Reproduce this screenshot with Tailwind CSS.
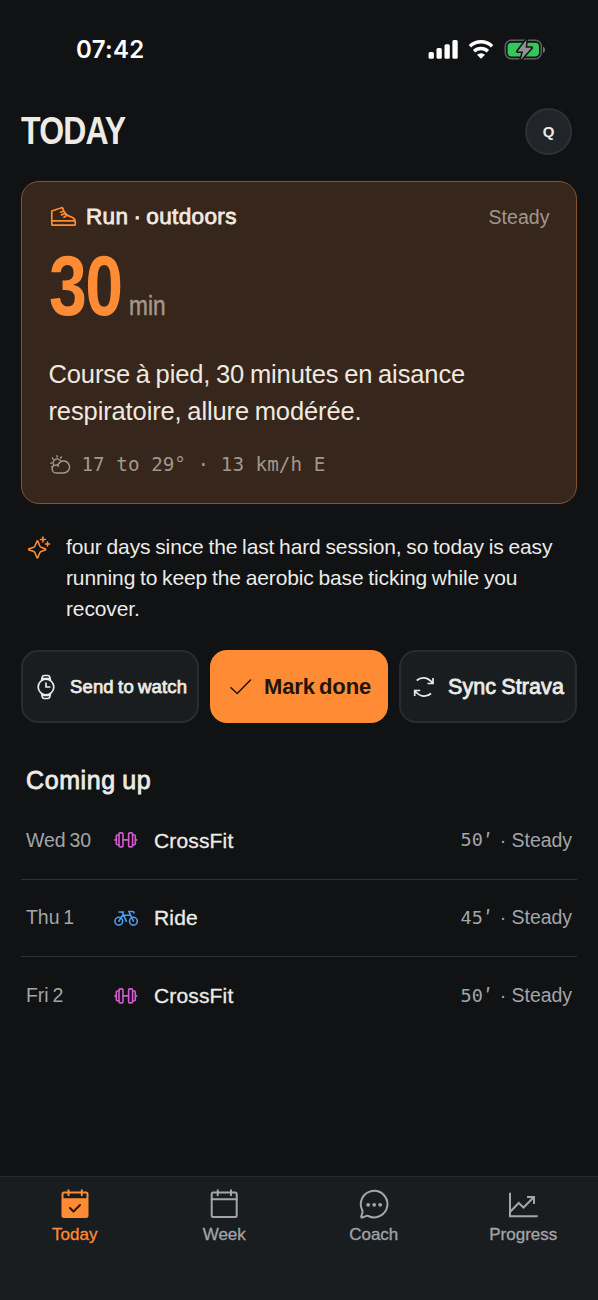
<!DOCTYPE html>
<html lang="en">
<head>
<meta charset="utf-8">
<title>Today</title>
<script src="https://cdn.jsdelivr.net/npm/@tailwindcss/browser@4"></script>
</head>
<body class="bg-[#101213]">
<svg class="hidden">
  <symbol id="barbell" viewBox="0 0 24 18"><g fill="none" stroke="currentColor" stroke-width="1.6" stroke-linejoin="round" stroke-linecap="round"><rect x="5" y="1.900" width="4" height="14" rx="1.200"/><rect x="14.600" y="1.900" width="4" height="14" rx="1.200"/><path d="M9 8.900h5.600M5 4H3.300a1 1 0 0 0-1 1v7.800a1 1 0 0 0 1 1H5M18.600 4h1.700a1 1 0 0 1 1 1v7.800a1 1 0 0 1-1 1h-1.700M2 8.900H.9M21.600 8.900h1.100"/></g></symbol>
</svg>
<div class="flex h-[1300px] w-[598px] flex-col overflow-hidden bg-[#101213] font-['Liberation_Sans',sans-serif] text-[#ecebe6]">
  <div class="flex h-[97px] items-center justify-between pr-[52px] pl-[76px]">
    <div class="mt-[2px] font-['Inter',sans-serif] text-[24px] font-semibold tracking-[.3px] text-white">07:42</div>
    <svg class="h-[24px] w-[118px]" viewBox="428 36 118 24">
      <g fill="#fff"><rect x="428.600" y="51" width="5.300" height="6.800" rx="1.500"/><rect x="436.500" y="47" width="5.300" height="10.800" rx="1.500"/><rect x="444.500" y="43.200" width="5.300" height="14.600" rx="1.500"/><rect x="452.400" y="39" width="5.300" height="18.800" rx="1.500"/><path d="M481 57.800l-4-4a6 6 0 0 1 8 0z"/></g>
      <g fill="none" stroke="#fff" stroke-width="3.400"><path d="M469.900 45.200a16 16 0 0 1 22.200 0"/><path d="M474.100 50.200a10 10 0 0 1 13.800 0"/></g>
      <rect x="505.300" y="39.300" width="36" height="18.400" rx="6" fill="none" stroke="#606163" stroke-width="1.500"/><rect x="507.600" y="41.700" width="31.400" height="13.700" rx="3.800" fill="#34c759"/><path d="M543 45.500q2 .8 2 3.200t-2 3.200z" fill="#77787a"/><path d="M526.500 38.700l-9 11.800h5.600l-2.400 8.400 10.800-12.200h-5.900z" fill="#909294" stroke="#101213" stroke-width="3" stroke-linejoin="round" paint-order="stroke"/>
    </svg>
  </div>
  <main class="flex grow flex-col px-[21px]">
    <header class="flex h-[68px] items-center justify-between pr-[5px]">
      <h1 class="origin-left scale-x-[.82] text-[39px] font-bold tracking-[-1px]">TODAY</h1>
      <div class="flex size-[47px] items-center justify-center rounded-full border-2 border-[#2d3136] bg-[#212429] pt-[2px] text-[15px] font-bold">Q</div>
    </header>
    <section class="mt-[16px] flex h-[323px] flex-col rounded-[18px] border border-[#8a522c] bg-[#36261b] px-[26.500px] text-[#f0e9e0]">
      <div class="mt-[22px] flex h-[26px] items-center">
        <svg class="ml-[1.500px] h-[22px] w-[28px]" viewBox="0 0 28 22" fill="none" stroke="#ff8b34" stroke-width="1.700" stroke-linejoin="round" stroke-linecap="round"><path d="M1.800 5L11.600 1.700q.9-.2 1.200.7L14 5.500q1.500 3 4 4.100l4.500 1.900q2.700 1.300 2.700 4.200v2.700q0 .8-.8.800H2.600q-.8 0-.8-.8zM1.800 14.900h23.300M10.600 6.200L13.800 5M11.600 8.900l3.400-1.400M14 11.200l2.700-2"/></svg>
        <span class="ml-[8px] text-[22.500px] tracking-[.35px] [word-spacing:-1.500px] [-webkit-text-stroke:.8px]">Run · outdoors</span>
        <span class="ml-auto pt-px text-[19.500px] tracking-[.05px] text-[#a2978e]">Steady</span>
      </div>
      <div class="mt-[12px] flex h-[86px] items-end">
        <span class="w-[80px] origin-left translate-y-[1px] scale-x-[.8] text-[85px] leading-[86px] font-bold tracking-[-2px] text-[#ff8b34]">30</span>
        <span class="origin-left -translate-y-[3px] scale-x-[.84] text-[27px] leading-[38px] text-[#a2978e] [-webkit-text-stroke:.5px]">min</span>
      </div>
      <p class="mt-[28px] text-[25.500px] leading-[37px] tracking-[-.12px] [word-spacing:-1.200px]">Course à pied, 30 minutes en aisance<br>respiratoire, allure modérée.</p>
      <div class="mt-[23px] flex h-[24px] items-center text-[#a2978e]">
        <svg class="ml-[1px] h-[20px] w-[22px]" viewBox="0 0 22 20" fill="none" stroke="currentColor" stroke-width="1.400" stroke-linecap="round"><path d="M3.900 10.300A4 4 0 0 1 10.600 5.800M7.300 2L7 .8M3.200 4l-.9-.9M10.700 3l.7-1.100M1.900 7.900L.7 8.100M2.600 11.300l-.9.500"/><path d="M7.700 10.700A6 6 0 1 1 13.600 18H6.300a4 4 0 0 1-1-7.900q1.800-.2 3.100 1.100"/></svg>
        <span class="ml-[10px] font-['DejaVu_Sans_Mono',monospace] text-[19.300px]">17 to 29° · 13 km/h E</span>
      </div>
    </section>
    <section class="mt-[27px] flex text-[21px] leading-[31px] tracking-[-.12px] [word-spacing:-.9px]">
      <svg class="mt-[5px] ml-[6px] h-[24px] w-[24px]" viewBox="0 0 24 24" fill="none" stroke="#ff8b34" stroke-width="1.600" stroke-linejoin="round" stroke-linecap="round"><path d="M9.800 5.600q.6-1.500 1.200 0l1.700 4.100q.4 1 1.400 1.500l4 1.600q1.200.6 0 1.200l-4 1.600q-1 .4-1.400 1.400L11 21.300q-.6 1.500-1.200 0L8.100 17q-.4-1-1.400-1.400l-4.500-1.600q-1.200-.6 0-1.200l4.500-1.600q1-.4 1.400-1.500zM15.900 1v5M13.400 3.500h5M20.500 6v4M18.500 8h4"/></svg>
      <p class="ml-[15px] whitespace-nowrap">four days since the last hard session, so today is easy<br>running to keep the aerobic base ticking while you<br>recover.</p>
    </section>
    <div class="mt-[26px] grid h-[73px] grid-cols-3 gap-[11px] [-webkit-text-stroke:.8px]">
      <button class="flex items-center rounded-[17px] border-2 border-[#282c30] bg-[#1a1d20] pl-[13px] whitespace-nowrap">
        <svg class="h-[26px] w-[20px]" viewBox="0 0 20 26" fill="none" stroke="currentColor" stroke-width="1.700" stroke-linejoin="round" stroke-linecap="round"><circle cx="10" cy="13" r="7.800"/><path d="M10 9V13h3.800M5.600 6.300L6.300 3q.4-1.500 1.800-1.500h3.800q1.400 0 1.800 1.500l.7 3.300M5.600 19.700l.7 3.300q.4 1.500 1.800 1.500h3.800q1.400 0 1.800-1.500l.7-3.300"/><path stroke-width="1.200" d="M6.500 4.300h7M6.500 21.700h7"/></svg>
        <span class="ml-[14px] text-[18.500px] tracking-[.15px] [word-spacing:-1px] [-webkit-text-stroke:.75px]">Send to watch</span>
      </button>
      <button class="flex items-center rounded-[17px] bg-[#ff8b34] pl-[20px] whitespace-nowrap text-[#21140b]">
        <svg class="h-[17px] w-[22px] translate-y-[.5px]" viewBox="0 0 22 17" fill="none" stroke="currentColor" stroke-width="1.500" stroke-linecap="round" stroke-linejoin="round"><path d="M1 9.200l6.200 5.800L20.500 1.500"/></svg>
        <span class="ml-[12px] text-[22px] font-bold tracking-[-.1px] [word-spacing:-2px] [-webkit-text-stroke:0]">Mark done</span>
      </button>
      <button class="flex items-center rounded-[17px] border-2 border-[#282c30] bg-[#1a1d20] pl-[12px] whitespace-nowrap">
        <svg class="h-[22px] w-[22px]" viewBox="0 0 22 22" fill="none" stroke="currentColor" stroke-width="1.700" stroke-linecap="butt" stroke-linejoin="miter"><path d="M3.700 4.500Q6.700 1.800 10.500 1.800q4.700 0 9.300 5.200M20 2v5.500h-5.500M18 17.500Q15 20.200 11.200 20.200q-4.700 0-9.300-5.200M1.700 20v-5.500h5.500"/></svg>
        <span class="ml-[13px] pt-px text-[21.500px] tracking-[.1px] [word-spacing:-1px]">Sync Strava</span>
      </button>
    </div>
    <h2 class="mt-[42px] ml-[5px] text-[25px] leading-[30px] tracking-[.6px] [word-spacing:-1px] [-webkit-text-stroke:.8px]">Coming up</h2>
    <div class="mt-[7px] flex flex-col text-[21px] [&>div]:flex [&>div]:h-[77.500px] [&>div]:items-center [&>div]:px-[5px]">
      <div class="border-b-[1.500px] border-[#2d3034]"><span class="w-[88px] text-[19.500px] tracking-[-.05px] [word-spacing:-1.500px] text-[#a2a5a9]">Wed 30</span><svg class="h-[18px] w-[24px] text-[#d45ad2]"><use href="#barbell"/></svg><span class="ml-[16px] tracking-[.15px] [-webkit-text-stroke:.3px]">CrossFit</span><span class="ml-auto flex items-center text-[19.500px] tracking-[-.05px] text-[#a2a5a9]"><span class="font-['DejaVu_Sans_Mono',monospace] text-[18.500px]">50</span><span class="mr-[6px] w-[11px] pl-[3px] font-['Inter',sans-serif] text-[21px]">′</span><span>· Steady</span></span></div>
      <div class="border-b-[1.500px] border-[#2d3034]"><span class="w-[88px] text-[19.500px] tracking-[-.05px] [word-spacing:-1.500px] text-[#a2a5a9]">Thu 1</span><svg class="h-[18px] w-[24px] text-[#4f9df0]" viewBox="0 0 24 18" fill="none" stroke="currentColor" stroke-width="1.600" stroke-linecap="round" stroke-linejoin="round"><circle cx="4.800" cy="12.200" r="3.900"/><circle cx="19.400" cy="12.200" r="3.900"/><path d="M4.800 12.200L8.700 6.200h7.100M12.300 12.200L8.200 3M5 3h4.500M19.400 12.200L14.800 2.500h3.600q1.600 0 1.600 1.600"/></svg><span class="ml-[16px] tracking-[.15px] [-webkit-text-stroke:.3px]">Ride</span><span class="ml-auto flex items-center text-[19.500px] tracking-[-.05px] text-[#a2a5a9]"><span class="font-['DejaVu_Sans_Mono',monospace] text-[18.500px]">45</span><span class="mr-[6px] w-[11px] pl-[3px] font-['Inter',sans-serif] text-[21px]">′</span><span>· Steady</span></span></div>
      <div><span class="w-[88px] text-[19.500px] tracking-[-.05px] [word-spacing:-1.500px] text-[#a2a5a9]">Fri 2</span><svg class="h-[18px] w-[24px] text-[#d45ad2]"><use href="#barbell"/></svg><span class="ml-[16px] tracking-[.15px] [-webkit-text-stroke:.3px]">CrossFit</span><span class="ml-auto flex items-center text-[19.500px] tracking-[-.05px] text-[#a2a5a9]"><span class="font-['DejaVu_Sans_Mono',monospace] text-[18.500px]">50</span><span class="mr-[6px] w-[11px] pl-[3px] font-['Inter',sans-serif] text-[21px]">′</span><span>· Steady</span></span></div>
    </div>
  </main>
  <nav class="grid h-[124px] shrink-0 grid-cols-4 border-t border-[#25292c] bg-[#1a1d20] text-[17px] text-[#a2a5a9] [-webkit-text-stroke:.3px] [&>a]:flex [&>a]:flex-col [&>a]:items-center [&>a]:pt-[11px] [&_span]:mt-[4px] [&_span]:leading-[22px]">
    <a class="text-[#ff8b34]"><svg class="h-[32px] w-[30px]" viewBox="0 0 30 32" fill="none" stroke="currentColor" stroke-width="2" stroke-linecap="round" stroke-linejoin="round"><path d="M2.500 11.300v16.200q0 1.500 1.500 1.500h22q1.500 0 1.500-1.500V11.300z" fill="currentColor"/><path d="M2.500 10V6q0-1.500 1.500-1.500h22q1.500 0 1.500 1.500v4M8.500 2.200v5M21.800 2.200v5"/><path d="M10 20l3.500 3.500 6.500-6.500" stroke="#1a1d20" stroke-width="2"/></svg><span>Today</span></a>
    <a><svg class="h-[32px] w-[30px]" viewBox="0 0 30 32" fill="none" stroke="currentColor" stroke-width="2" stroke-linecap="round" stroke-linejoin="round"><rect x="2.700" y="4.500" width="25" height="24.500" rx="1.500"/><path d="M2.700 11.300h25M8.700 2.200v5M22 2.200v5"/></svg><span>Week</span></a>
    <a><svg class="h-[32px] w-[30px]" viewBox="0 0 30 32" fill="none" stroke="currentColor" stroke-width="2" stroke-linecap="round" stroke-linejoin="round"><path d="M9.200 28a13.300 13.300 0 1 0-6-6q.6 1.300.2 2.700l-1.100 3.600q-.4 1.400 1 1.200l3.600-1.400q1.200-.4 2.300-.1z"/><g fill="currentColor" stroke="none"><circle cx="9.200" cy="16.800" r="1.900"/><circle cx="15.200" cy="16.800" r="1.900"/><circle cx="21.200" cy="16.800" r="1.900"/></g></svg><span>Coach</span></a>
    <a><svg class="h-[32px] w-[30px]" viewBox="0 0 30 32" fill="none" stroke="currentColor" stroke-width="2" stroke-linecap="butt" stroke-linejoin="miter"><path d="M2 4.800v23.400h27.700M2.500 23.500L10.700 15l4.800 4.500L25.700 9.200M19 9h7v7"/></svg><span>Progress</span></a>
  </nav>
</div>
</body>
</html>
